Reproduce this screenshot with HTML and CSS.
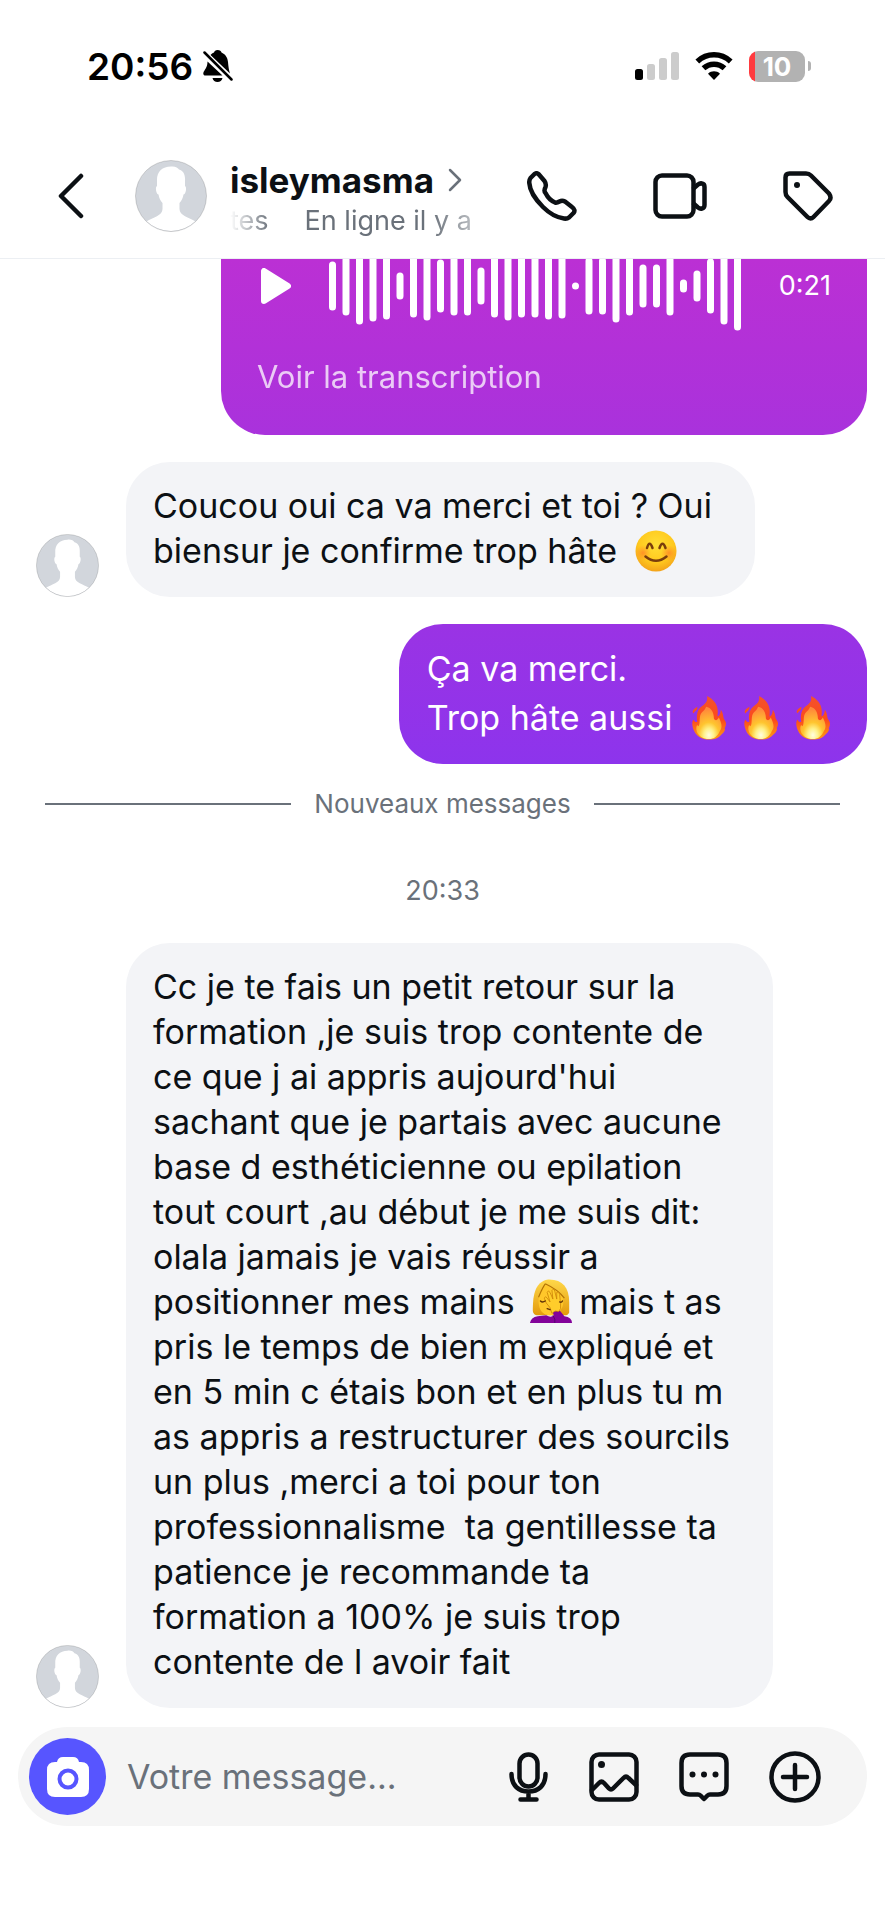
FILE: index.html
```
<!DOCTYPE html>
<html lang="fr">
<head>
<meta charset="utf-8">
<meta name="viewport" content="width=device-width, initial-scale=1">
<title>isleymasma</title>
<link rel="stylesheet" href="styles.css">
</head>
<body>
<svg class="defs" aria-hidden="true">
  <defs>
    <clipPath id="head-clip"><circle cx="36" cy="36" r="35"/></clipPath>
    <symbol id="person" viewBox="0 0 72 72">
      <circle cx="36" cy="36" r="35.5" fill="#d2d6dc"/>
      <path clip-path="url(#head-clip)" fill="#fff" d="M36 6.500C40 6 43 7.500 44 9.500C48.500 10.500 50.500 15 50 21L50 26C52 27 51 34 48.500 34.500C48 38 46.500 41 44.500 43V49C44.500 56 54 57 60.500 61.500L72 72H0L11.500 61.500C18 57 27.500 56 27.500 49V43C25.500 41 24 38 23.500 34.500C21 34 20 27 22 26V21C21.500 12 27 6.500 36 6.500Z"/>
      <circle cx="36" cy="36" r="35.500" fill="none" stroke="#000" stroke-opacity=".15"/>
    </symbol>
    <linearGradient id="flame-outer" x1="0" y1="0" x2="0" y2="1"><stop offset="0" stop-color="#f4522c"/><stop offset=".55" stop-color="#fb4a1c"/><stop offset="1" stop-color="#ff9c12"/></linearGradient>
    <radialGradient id="flame-inner" cx=".5" cy=".88" r=".8"><stop offset="0" stop-color="#fffde0"/><stop offset=".25" stop-color="#fff18a"/><stop offset=".5" stop-color="#ffc52f"/><stop offset="1" stop-color="#ff8a3a"/></radialGradient>
    <symbol id="flame" viewBox="0 0 36 46">
      <path fill="url(#flame-outer)" d="M16 1C22 4 27 9 27 17C27 19 26.500 21 27 22C29 21 30 18 30 15C32 17 32.500 21 33 24C36 28 36 30 34 34C35 35 34 38 31 40C28 44 23 45.500 18 45.500C11 45.500 5 42 3 37C1 33 0 28 2 25C4 28 5 28 6 27C5 21 6 15 10 12C14 9 17 7 16 1ZM6 12C7 15 3 17 2 19C0 16 3 14 6 12Z"/>
      <path fill="url(#flame-inner)" d="M15 12C20 13 23 17 23 24C24 26 26 27 28 23C31 29 32 33 29 37C27 42 23 45 18 45C12 45 6 42 5 35C5 31 6 30 7 32C9 31 8 26 9 21C10 17 14 16 15 12Z"/>
    </symbol>
    <radialGradient id="face" cx=".5" cy=".35" r=".65"><stop offset="0" stop-color="#ffdf35"/><stop offset=".65" stop-color="#ffc91e"/><stop offset="1" stop-color="#f3a31a"/></radialGradient>
    <radialGradient id="blush"><stop offset="0" stop-color="#ff6b2a" stop-opacity=".6"/><stop offset="1" stop-color="#ff7a2a" stop-opacity="0"/></radialGradient>
    <linearGradient id="hair" x1="0" y1="0" x2="0" y2="1"><stop offset="0" stop-color="#ffd84a"/><stop offset="1" stop-color="#e39a0c"/></linearGradient>
  </defs>
</svg>

<div class="screen">
  <div class="status">
    <div class="status-left">
      <span class="clock">20:56</span>
      <svg width="30" height="32" viewBox="0 0 30 32" role="img" aria-label="Silencieux">
        <path d="M14.500 0C12.500 0 11.500 1 11 2.500C9.500 3 8.500 4 7.500 5L27 23.500C26 20 25.500 18 25 12C24.500 7 22 4 18.500 2.500C18 1 17 0 14.500 0ZM4.500 11.500C4.500 16 3 18 1.500 20.500C-.5 23 0 25.500 2.500 25.500H19.500ZM9.500 28H19.500C19 30.500 17 32 14.500 32S10 30.500 9.500 28Z"/>
        <path d="M1.500 2.500L28.500 29.500" fill="none" stroke="#fff" stroke-width="4.500"/>
        <path d="M1.500 2.500L28.500 29.500" fill="none" stroke="#000" stroke-width="2.500" stroke-linecap="round"/>
      </svg>
    </div>
    <div class="status-right">
      <svg width="44" height="28" viewBox="0 0 44 28" role="img" aria-label="Réseau">
        <rect y="17" width="8" height="11" rx="2.500"/>
        <g fill="#ccc"><rect x="12" y="12" width="8" height="16" rx="2.500"/><rect x="24" y="6" width="8" height="22" rx="2.500"/><rect x="36" width="8" height="28" rx="2.500"/></g>
      </svg>
      <svg width="38" height="28" viewBox="0 0 38 28" role="img" aria-label="Wi-Fi">
        <path fill="none" stroke="#000" stroke-width="5.500" d="M2.300 9.500C12 .6 26 .6 35.700 9.500M8.500 16.300C14.500 10.800 23.500 10.800 29.500 16.300"/>
        <path d="M19 28L13 21.700C16.500 18.500 21.500 18.500 25 21.700Z"/>
      </svg>
      <div class="battery"><span class="battery-body">10</span><span class="battery-tip"></span></div>
    </div>
  </div>

  <header class="header">
    <button class="icon-btn back" aria-label="Retour">
      <svg width="26" height="46" viewBox="0 0 26 46"><path d="M23 3L3 23L23 43" fill="none" stroke="#0c1014" stroke-width="4.500" stroke-linecap="round" stroke-linejoin="round"/></svg>
    </button>
    <svg class="avatar-lg" role="img" aria-label="Photo de profil"><use href="#person"/></svg>
    <div class="who">
      <a class="name" href="#">isleymasma
        <svg width="14" height="24" viewBox="0 0 14 24"><path d="M2 2L12 12L2 22" fill="none" stroke="#6a717a" stroke-width="2.500" stroke-linecap="round" stroke-linejoin="round"/></svg>
      </a>
      <div class="presence"><span>tes</span><span>En ligne il y a</span></div>
    </div>
    <div class="actions">
      <button class="icon-btn" aria-label="Appel audio">
        <svg width="50" height="50" viewBox="0 0 50 50"><path class="line" d="M3.500 7L7.500 3Q9.500 1.500 11.500 3L17.500 10Q19.500 13 18.500 16Q16.500 20 18.500 22Q22 29 28 31.500Q30 32 32.500 30.500Q35 29 38 30.500L45 36Q49 39 46.500 42L42 46.500Q40 48 37 47.500Q26 46 16 36Q3 23 2.300 12Q2 9 3.500 7Z"/></svg>
      </button>
      <button class="icon-btn" aria-label="Appel vidéo">
        <svg width="54" height="46" viewBox="0 0 54 46"><rect class="line" x="2.500" y="2.500" width="38" height="41" rx="6.500"/><path class="line" d="M41 15L45 11.500Q47 10 49 10.500Q51.500 11 51.500 14V32Q51.500 35 49 35.500Q47 36 45 34.500L41 31"/></svg>
      </button>
      <button class="icon-btn" aria-label="Ajouter un libellé">
        <svg width="50" height="50" viewBox="0 0 50 50"><path class="line" d="M6.500 2.500H23Q26 2.500 28 4.500L46 22.500Q49 27 46 30L30.500 46Q27.500 49 24.500 46L4.500 26Q2.500 24 2.500 21V6.500Q2.500 2.500 6.500 2.500Z"/><circle cx="14" cy="14" r="3" fill="#0c1014"/></svg>
      </button>
    </div>
  </header>

  <main class="chat">
    <div class="voice">
      <div class="voice-row">
        <button class="icon-btn play" aria-label="Lire">
          <svg width="30" height="36" viewBox="0 0 30 36"><path d="M3 3V33L27 18Z" fill="#fff" stroke="#fff" stroke-width="6" stroke-linejoin="round"/></svg>
        </button>
        <svg class="wave" width="412" height="73" viewBox="0 -27 412 73" aria-hidden="true"><path fill="none" stroke="#fff" stroke-width="7" stroke-linecap="round" d="M3.500-21V21M17-26V26M30.500-35V35M44-32V32M57.500-30V30M71-10V10M84.500-28V28M98-31V31M111.500-23V23M125-26V26M138.500-26V26M152-15V15M165.500-28V28M179-31V31M192.500-28V28M206-28V28M219.500-30V30M233-29V29M246.500 0V.01M260-25V25M273.500-25V25M287-33V33M300.500-26V26M314-18V18M327.500-18V18M341-26V26M354.500-3V3M368-12V12M381.500-24V24M395-35V35M408.500-41V41"/></svg>
        <span class="duration">0:21</span>
      </div>
      <button class="transcript">Voir la transcription</button>
    </div>

    <div class="row">
      <svg class="avatar" aria-hidden="true"><use href="#person"/></svg>
      <p class="bubble received">Coucou oui ca va merci et toi ? Oui<br>biensur je confirme trop hâte
        <svg class="emoji smile" viewBox="0 0 42 42" role="img" aria-label="sourire"><circle cx="21" cy="21" r="20.500" fill="url(#face)"/><circle cx="8" cy="23" r="8" fill="url(#blush)"/><circle cx="34" cy="23" r="8" fill="url(#blush)"/><path d="M12 18Q14.500 9.500 17.500 18M24.500 18Q27.500 9.500 30.500 18M10.500 26.500Q21 35 31.500 26.500" fill="none" stroke="#7a3d0c" stroke-width="2.500" stroke-linecap="round"/></svg>
      </p>
    </div>

    <p class="bubble sent">Ça va merci.<br>Trop hâte aussi <svg class="fire" role="img" aria-label="feu"><use href="#flame"/></svg><svg class="fire" role="img" aria-label="feu"><use href="#flame"/></svg><svg class="fire" role="img" aria-label="feu"><use href="#flame"/></svg></p>

    <div class="divider">Nouveaux messages</div>
    <time class="stamp">20:33</time>

    <div class="row">
      <svg class="avatar" aria-hidden="true"><use href="#person"/></svg>
      <p class="bubble received">Cc je te fais un petit retour sur la<br>formation ,je suis trop contente de<br>ce que j ai appris aujourd'hui<br>sachant que je partais avec aucune<br>base d esthéticienne ou epilation<br>tout court ,au début je me suis dit:<br>olala jamais je vais réussir a<br>positionner mes mains <svg class="emoji palm" viewBox="0 0 44 46" role="img" aria-label="main sur le visage"><path fill="url(#hair)" d="M19 .5C34 0 41 9 41 24V35Q40 38 36 38H7Q3 37 3 33C3 20 4 3 19 .5Z"/><path fill="#ffc72a" d="M17 6C12 10 9 16 9 23C9 33 14 38 21 38S35 33 35 23C35 15 27 12 17 6Z"/><path fill="none" stroke="#b37304" stroke-width="1.200" d="M16 5C13 9 11 14 9 19M16 5Q29 11 36 20"/><path fill="#83039a" d="M0 46Q1 40 8 39L17 38Q22 41 25 38L23 33Q28 30 32 34L36 39Q44 40 44 46Z"/><path fill="none" stroke="#580070" d="M24 38Q27 42 26 46"/><path fill="#ffcd2b" stroke="#c98005" stroke-width=".8" d="M23 36L21 30Q16 25 15 20Q16 17 18 20L21 24L18 14Q19 11 21 14L24 21L23 12Q25 9 26 13L28 21L28 14Q30 12 31 16L32 26Q33 32 30 34Q26 32 23 36Z"/><path fill="none" stroke="#633509" stroke-width="1.500" stroke-linecap="round" d="M11 23Q13 25 16 23M31 24Q33 25 34 23M18 31L21 32"/></svg>mais t as<br>pris le temps de bien m expliqué et<br>en 5 min c étais bon et en plus tu m<br>as appris a restructurer des sourcils<br>un plus ,merci a toi pour ton<br>professionnalisme &nbsp;ta gentillesse ta<br>patience je recommande ta<br>formation a 100% je suis trop<br>contente de l avoir fait</p>
    </div>
  </main>

  <form class="composer">
    <button type="button" class="icon-btn camera" aria-label="Appareil photo">
      <svg width="42" height="40" viewBox="0 0 42 40"><path fill="#fff" d="M8 5H10Q11 0 16 0H26Q31 0 32 5H34Q42 5 42 13V32Q42 40 34 40H8Q0 40 0 32V13Q0 5 8 5Z"/><circle cx="21" cy="22" r="8.500" fill="none" stroke="#5755ff" stroke-width="4"/></svg>
    </button>
    <input class="field" type="text" aria-label="Votre message" placeholder="Votre message...">
    <div class="tools">
      <button type="button" class="icon-btn" aria-label="Message vocal">
        <svg width="40" height="50" viewBox="0 0 40 50"><rect class="line" x="10.500" y="2.500" width="18" height="32" rx="9"/><path class="line" d="M2.500 22C2.500 34 10 39.500 19.500 39.500S36.500 34 36.500 22M19.500 40V47M11.500 47.500H27.500"/></svg>
      </button>
      <button type="button" class="icon-btn" aria-label="Photo">
        <svg width="50" height="50" viewBox="0 0 50 50"><rect class="line" x="2.500" y="2.500" width="45" height="45" rx="7.500"/><circle cx="12.500" cy="12.500" r="3.500" fill="#0c1014"/><path class="line" d="M3 38L10 31Q12.500 28.500 15 31L20 36.500Q22 38.500 24 36.500L34.500 26Q37 23.500 39.500 26L47 33"/></svg>
      </button>
      <button type="button" class="icon-btn" aria-label="Réponse enregistrée">
        <svg width="50" height="50" viewBox="0 0 50 50"><path class="line" d="M11 2.500H39Q47.500 2.500 47.500 11V34Q47.500 42.500 39 42.500H31Q29.500 42.500 28.500 43.500L25 47L21.500 43.500Q20.500 42.500 19 42.500H11Q2.500 42.500 2.500 34V11Q2.500 2.500 11 2.500Z"/><g fill="#0c1014"><circle cx="13.500" cy="22.500" r="3"/><circle cx="25" cy="22.500" r="3"/><circle cx="36.500" cy="22.500" r="3"/></g></svg>
      </button>
      <button type="button" class="icon-btn" aria-label="Plus">
        <svg width="52" height="52" viewBox="0 0 52 52"><circle class="line" cx="26" cy="26" r="23.500"/><path class="line" d="M26 14V38M14 26H38"/></svg>
      </button>
    </div>
  </form>
</div>
</body>
</html>
```
FILE: styles.css
```
* { box-sizing: border-box; }

body {
  margin: 0;
  background: #fff;
  color: #0c1014;
  font-family: Inter, "Noto Sans", sans-serif;
  font-size: 34px;
}

svg { display: block; flex: none; }
p { margin: 0; }
.defs { position: absolute; width: 0; height: 0; }

.screen {
  display: flex;
  flex-direction: column;
  min-height: 100vh;
}

.line {
  fill: none;
  stroke: #0c1014;
  stroke-width: 4.5;
  stroke-linecap: round;
  stroke-linejoin: round;
}

.icon-btn {
  display: flex;
  align-items: center;
  justify-content: center;
  flex: none;
  padding: 0;
  border: 0;
  background: none;
}

/* Status bar */
.status {
  display: flex;
  align-items: center;
  justify-content: space-between;
  height: 132px;
  padding: 0 74px 0 87px;
  color: #000;
}
.status-left { display: flex; align-items: center; gap: 10px; }
.clock { font-size: 37px; font-weight: 600; }
.status-right { display: flex; align-items: center; gap: 16px; }
.battery { display: flex; align-items: center; gap: 3px; }
.battery-body {
  width: 56px;
  height: 31px;
  border-radius: 9px;
  background: linear-gradient(90deg, #ff3b3f 6px, #b2b2b2 6px);
  color: #fff;
  font-size: 26px;
  font-weight: 700;
  line-height: 31px;
  text-align: center;
}
.battery-tip { width: 3px; height: 10px; border-radius: 0 5px 5px 0; background: #b2b2b2; }

/* Conversation header */
.header {
  display: flex;
  align-items: center;
  height: 127px;
  padding: 2px 52px 0 58px;
  border-bottom: 1px solid #eceff3;
}
.avatar-lg { width: 72px; height: 72px; margin-left: 51px; }
.who { width: 240px; margin-left: 23px; padding-top: 8px; }
.name {
  display: flex;
  align-items: center;
  gap: 14px;
  color: inherit;
  font-size: 35px;
  font-weight: 700;
  line-height: 42px;
  text-decoration: none;
}
.presence {
  display: flex;
  gap: 36px;
  color: #6a717a;
  font-size: 27px;
  line-height: 40px;
  white-space: nowrap;
  overflow: hidden;
  mask-image: linear-gradient(90deg, transparent, #000 40px, #000 200px, rgba(0, 0, 0, .5));
}
.actions { display: flex; align-items: center; gap: 76px; margin-left: auto; }

/* Messages */
.chat { flex: 1; padding: 0 18px 0 36px; }

.voice {
  width: 646px;
  max-width: 100%;
  margin-left: auto;
  padding: 0 36px;
  border-radius: 0 0 44px 44px;
  background: linear-gradient(#bb30d4, #a932dc);
  color: #fff;
}
.voice-row { display: flex; align-items: flex-start; padding-left: 4px; }
.play { margin-top: 9px; }
.wave { margin-left: 38px; }
.duration { margin-left: auto; font-size: 27px; line-height: 54px; }
.transcript {
  display: block;
  margin: 22px 0 36px;
  padding: 0;
  border: 0;
  background: none;
  color: #fff;
  opacity: .75;
  font: inherit;
  font-size: 31px;
  line-height: 45px;
}
.voice::after { content: ""; display: table; }

.row { display: flex; align-items: flex-end; gap: 27px; margin-top: 27px; }
.avatar { width: 63px; height: 63px; }
.bubble { width: fit-content; border-radius: 44px; white-space: nowrap; }
.received { padding: 21px 43px 24px 27px; background: #f3f4f7; line-height: 45px; }
.sent {
  margin: 27px 0 0 auto;
  padding: 20px 36px 22px 28px;
  background: linear-gradient(#9a33e4, #8d34ec);
  color: #fff;
  line-height: 49px;
}
.emoji { display: inline-block; width: 42px; height: 42px; vertical-align: -9px; }
.smile { margin-left: 8px; }
.palm { width: 44px; height: 44px; margin: 0 6px 0 5px; }
.fire { display: inline-block; width: 36px; height: 45px; margin-left: 16px; vertical-align: -10px; }
.fire:first-of-type { margin-left: 9px; }

.divider {
  display: flex;
  align-items: center;
  gap: 23px;
  margin: 20px 27px 0 9px;
  color: #6a717a;
  font-size: 26px;
  line-height: 40px;
}
.divider::before, .divider::after { content: ""; flex: 1; height: 2px; background: #6a717a; }
.stamp {
  display: block;
  margin: 47px 18px 0 0;
  color: #6a717a;
  font-size: 27px;
  line-height: 40px;
  text-align: center;
}
.stamp + .row { margin-top: 32px; }

/* Composer */
.composer {
  display: flex;
  align-items: center;
  height: 99px;
  margin: 19px 18px 94px;
  padding: 0 46px 0 11px;
  border-radius: 50px;
  background: #f5f5f5;
}
.camera { width: 77px; height: 77px; border-radius: 50%; background: #5755ff; }
.field {
  flex: 1;
  min-width: 0;
  margin-left: 21px;
  padding: 0;
  border: 0;
  outline: 0;
  background: none;
  font: inherit;
  color: inherit;
}
.field::placeholder { color: #6a717a; opacity: 1; }
.tools { display: flex; align-items: center; gap: 40px; }
```
